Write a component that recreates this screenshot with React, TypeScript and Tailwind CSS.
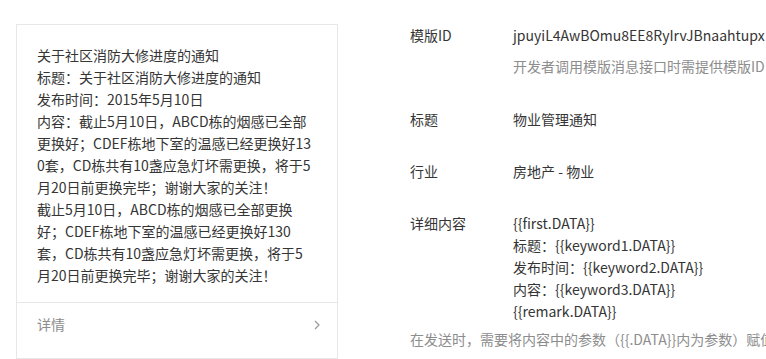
import React from "react";

const previewLines = [
  "关于社区消防大修进度的通知",
  "标题：关于社区消防大修进度的通知",
  "发布时间：2015年5月10日",
  "内容：截止5月10日，ABCD栋的烟感已全部",
  "更换好；CDEF栋地下室的温感已经更换好13",
  "0套，CD栋共有10盏应急灯坏需更换，将于5",
  "月20日前更换完毕；谢谢大家的关注！",
  "截止5月10日，ABCD栋的烟感已全部更换",
  "好；CDEF栋地下室的温感已经更换好130",
  "套，CD栋共有10盏应急灯坏需更换，将于5",
  "月20日前更换完毕；谢谢大家的关注！",
];

const detailLines = [
  "{{first.DATA}}",
  "标题：{{keyword1.DATA}}",
  "发布时间：{{keyword2.DATA}}",
  "内容：{{keyword3.DATA}}",
  "{{remark.DATA}}",
];

function PreviewCard() {
  return (
    <div className="mt-[24px] ml-[16px] w-[322px] shrink-0 border border-[#e7e7e7] bg-white">
      <div className="px-[20px] pt-[19px] pb-[16px]">
        {previewLines.map((line, i) => (
          <div key={i} className="whitespace-nowrap leading-[22px]">
            {line}
          </div>
        ))}
      </div>
      <div className="flex h-[44px] items-center justify-between border-t border-[#e7e7e7] pl-[20px] pr-[17px]">
        <span className="text-[#8d8d8d]">详情</span>
        <svg width="6" height="10" viewBox="0 0 6 10" fill="none">
          <polyline points="1,1 5,5 1,9" stroke="#9a9a9a" strokeWidth="1.2" />
        </svg>
      </div>
    </div>
  );
}

function Row({ label, children, className = "" }: { label: string; children: React.ReactNode; className?: string }) {
  return (
    <div className={"flex " + className}>
      <div className="w-[103px] shrink-0 leading-[22px]">{label}</div>
      <div className="min-w-0 flex-1">{children}</div>
    </div>
  );
}

export default function App() {
  return (
    <div
      className="flex h-[359px] w-[766px] overflow-hidden bg-white text-[14px] text-[#353535]"
      style={{ fontFamily: '"Noto Sans CJK SC", "Noto Sans", sans-serif' }}
    >
      <PreviewCard />
      <div className="ml-[72px] min-w-0 flex-1 pt-[24px]">
        <Row label="模版ID">
          <div className="whitespace-nowrap leading-[22px]">jpuyiL4AwBOmu8EE8RyIrvJBnaahtupx</div>
          <div className="mt-[9px] whitespace-nowrap leading-[22px] text-[#8d8d8d]">
            开发者调用模版消息接口时需提供模版ID
          </div>
        </Row>
        <Row label="标题" className="mt-[31px]">
          <div className="leading-[22px]">物业管理通知</div>
        </Row>
        <Row label="行业" className="mt-[30px]">
          <div className="leading-[22px]">房地产 - 物业</div>
        </Row>
        <Row label="详细内容" className="mt-[30px]">
          {detailLines.map((l, i) => (
            <div key={i} className="whitespace-nowrap leading-[22px]">
              {l}
            </div>
          ))}
        </Row>
        <div className="mt-[6px] whitespace-nowrap leading-[22px] text-[#8d8d8d]">
          在发送时，需要将内容中的参数（{"{{.DATA}}"}内为参数）赋值替换为需要的信息
        </div>
      </div>
    </div>
  );
}
